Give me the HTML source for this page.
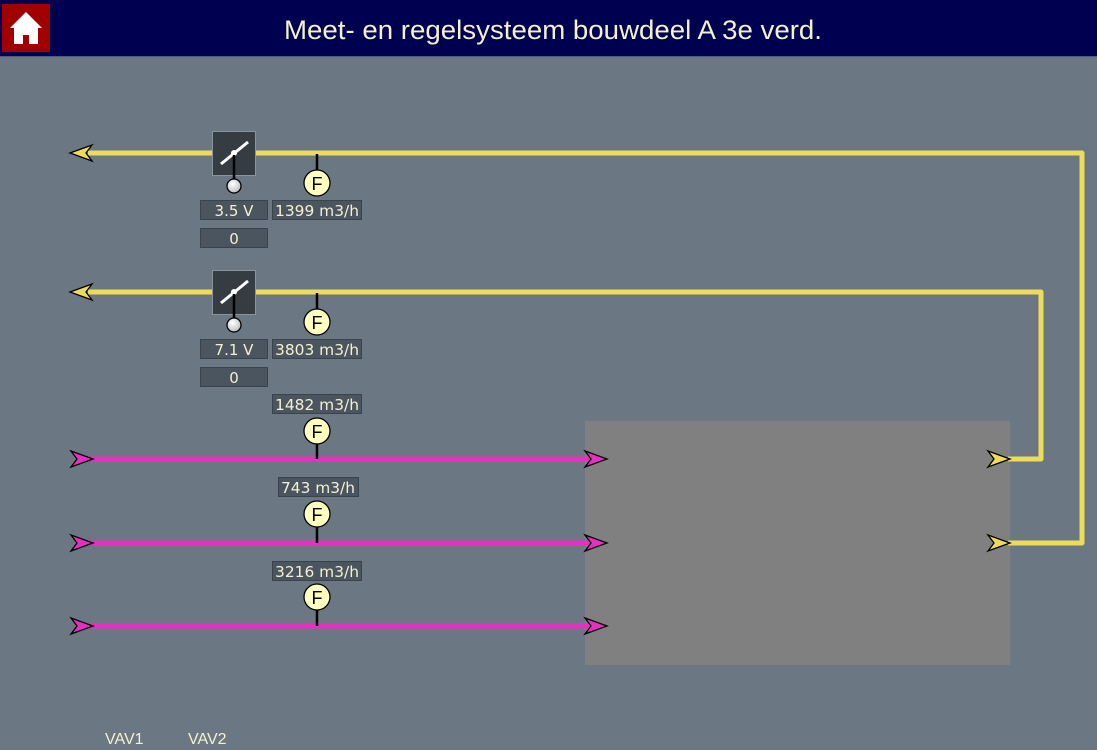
<!DOCTYPE html>
<html><head><meta charset="utf-8"><style>
html,body{margin:0;padding:0;width:1097px;height:750px;overflow:hidden;background:#6b7783}
svg{display:block}
.t{font-family:"DejaVu Sans",Verdana,sans-serif;font-size:15px;fill:#f5f0d0;text-anchor:middle}
.f{font-family:"Liberation Sans",Arial,sans-serif;font-size:18px;fill:#000;text-anchor:middle}
</style></head><body>
<svg width="1097" height="750" xmlns="http://www.w3.org/2000/svg">
<defs><radialGradient id="g" cx="40%" cy="35%" r="70%"><stop offset="0" stop-color="#fff"/><stop offset="1" stop-color="#b8bcc0"/></radialGradient></defs>
<rect x="0" y="0" width="1097" height="56" fill="#000050"/>
<rect x="0" y="56" width="1097" height="1" fill="#4a5a80"/>
<rect x="2" y="4" width="48" height="48" fill="#a00000"/>
<path d="M26 12 L10 28 L14 28 L14 44 L23 44 L23 35 L29 35 L29 44 L38 44 L38 28 L42 28 Z" fill="#fff"/>
<text x="553" y="39" font-family="Liberation Sans,Arial,sans-serif" font-size="27" fill="#f5f0d0" text-anchor="middle" textLength="538" lengthAdjust="spacingAndGlyphs">Meet- en regelsysteem bouwdeel A 3e verd.</text>

<rect x="585" y="421" width="425" height="244" fill="#808080"/>

<g fill="none" stroke="#ecdc5a" stroke-width="5" stroke-linejoin="round">
<path d="M88 153 H1082 V543 H1008"/>
<path d="M88 292 H1041 V459 H1008"/>
</g>
<g fill="none" stroke="#e830c0" stroke-width="5">
<path d="M88 459 H600"/><path d="M88 543 H600"/><path d="M88 626 H600"/>
</g>
<g stroke="#000" stroke-width="1.3" stroke-linejoin="miter">
<path d="M70 153 L92 145 L86 153 L92 161 Z" fill="#ecdc5a"/>
<path d="M70 292 L92 284 L86 292 L92 300 Z" fill="#ecdc5a"/>
<path d="M1010 459 L988 451 L994 459 L988 467 Z" fill="#ecdc5a"/>
<path d="M1010 543 L988 535 L994 543 L988 551 Z" fill="#ecdc5a"/>
<g fill="#e830c0">
<path d="M93 459 L71 451 L77 459 L71 467 Z"/>
<path d="M93 543 L71 535 L77 543 L71 551 Z"/>
<path d="M93 626 L71 618 L77 626 L71 634 Z"/>
<path d="M607 459 L585 451 L591 459 L585 467 Z"/>
<path d="M607 543 L585 535 L591 543 L585 551 Z"/>
<path d="M607 626 L585 618 L591 626 L585 634 Z"/>
</g>
</g>

<g>
<rect x="212.5" y="131.5" width="43" height="44" fill="#353c42" stroke="#8a949c"/>
<path d="M221 164 L248 142" stroke="#fff" stroke-width="3"/>
<circle cx="234" cy="153" r="3" fill="#fff"/>
<path d="M234 155 V180" stroke="#000" stroke-width="2.5"/>
<circle cx="234" cy="186" r="7" fill="url(#g)" stroke="#000" stroke-width="1.3"/>
<rect x="200.5" y="200.5" width="67" height="19" fill="#4a5560" stroke="#3a434b"/>
<text class="t" x="234" y="216">3.5 V</text>
<rect x="200.5" y="228.5" width="67" height="19" fill="#4a5560" stroke="#3a434b"/>
<text class="t" x="234" y="244">0</text>
</g>
<g>
<rect x="212.5" y="270.5" width="43" height="44" fill="#353c42" stroke="#8a949c"/>
<path d="M221 303 L248 281" stroke="#fff" stroke-width="3"/>
<circle cx="234" cy="292" r="3" fill="#fff"/>
<path d="M234 294 V319" stroke="#000" stroke-width="2.5"/>
<circle cx="234" cy="325" r="7" fill="url(#g)" stroke="#000" stroke-width="1.3"/>
<rect x="200.5" y="339.5" width="67" height="19" fill="#4a5560" stroke="#3a434b"/>
<text class="t" x="234" y="355">7.1 V</text>
<rect x="200.5" y="367.5" width="67" height="19" fill="#4a5560" stroke="#3a434b"/>
<text class="t" x="234" y="383">0</text>
</g>

<g stroke="#000" stroke-width="2.5">
<path d="M317 154 V170"/><path d="M317 293 V309"/>
<path d="M317 444 V459"/><path d="M317 527 V543"/><path d="M317 610 V626"/>
</g>
<g fill="#ffffc0" stroke="#000" stroke-width="1.3">
<circle cx="317" cy="183" r="13"/><circle cx="317" cy="322" r="13"/>
<circle cx="317" cy="431" r="13"/><circle cx="317" cy="514" r="13"/><circle cx="317" cy="597" r="13"/>
</g>
<text class="f" x="317" y="190">F</text><text class="f" x="317" y="329">F</text>
<text class="f" x="317" y="438">F</text><text class="f" x="317" y="521">F</text><text class="f" x="317" y="604">F</text>

<g fill="#4a5560" stroke="#3a434b">
<rect x="272.5" y="200.5" width="89" height="19"/>
<rect x="272.5" y="339.5" width="89" height="19"/>
<rect x="272.5" y="394.5" width="89" height="19"/>
<rect x="278.5" y="477.5" width="80" height="19"/>
<rect x="272.5" y="561.5" width="89" height="19"/>
</g>
<text class="t" x="317" y="216" textLength="84" lengthAdjust="spacingAndGlyphs">1399 m3/h</text>
<text class="t" x="317" y="355" textLength="84" lengthAdjust="spacingAndGlyphs">3803 m3/h</text>
<text class="t" x="317" y="410" textLength="84" lengthAdjust="spacingAndGlyphs">1482 m3/h</text>
<text class="t" x="318" y="493" textLength="74" lengthAdjust="spacingAndGlyphs">743 m3/h</text>
<text class="t" x="317" y="577" textLength="84" lengthAdjust="spacingAndGlyphs">3216 m3/h</text>

<g font-family="Liberation Sans,Arial,sans-serif" font-size="16" fill="#f5f0d0">
<text x="105" y="744">VAV1</text><text x="188" y="744">VAV2</text>
</g>
</svg>
</body></html>
